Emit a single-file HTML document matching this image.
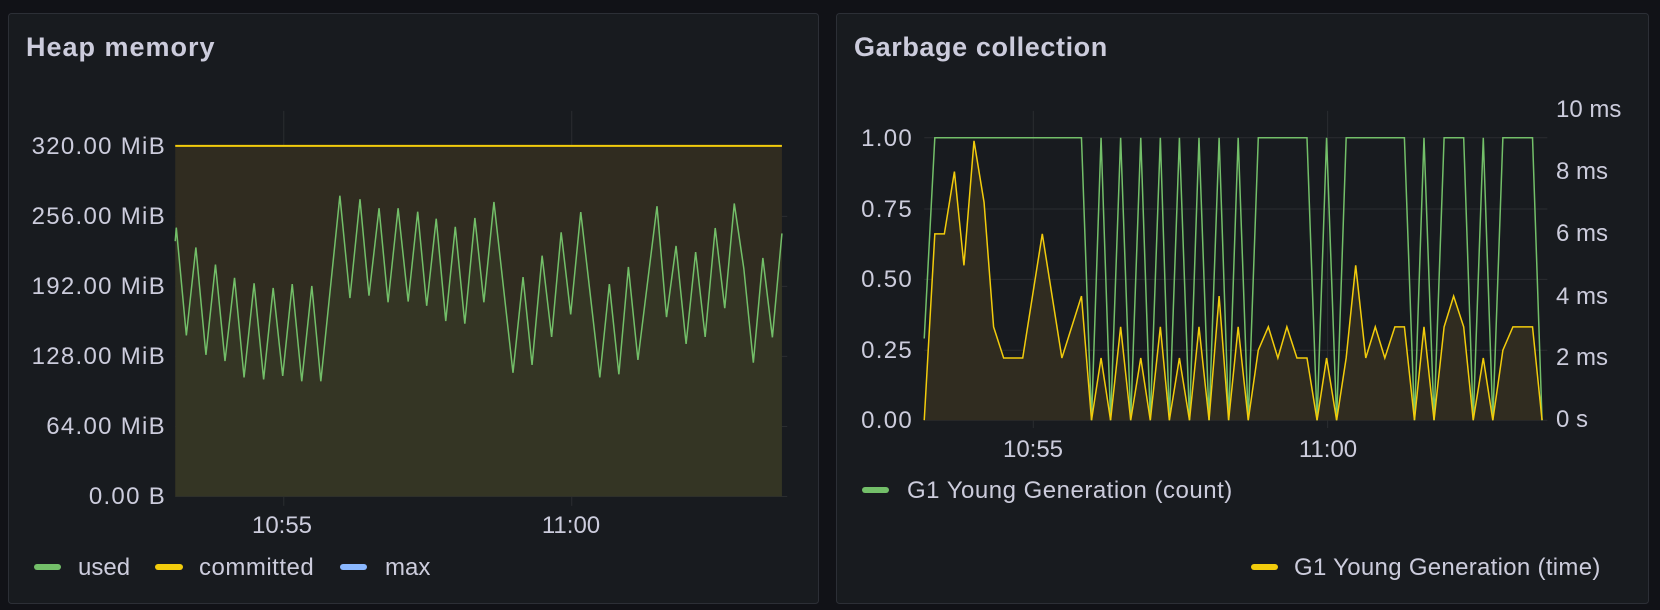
<!DOCTYPE html>
<html><head><meta charset="utf-8"><style>
html,body{margin:0;padding:0;background:#111217;width:1660px;height:610px;overflow:hidden;font-family:"Liberation Sans",sans-serif;}
svg{position:absolute;left:0;top:0}
text{font-family:"Liberation Sans",sans-serif;fill:#ccccdc}
</style></head><body>
<svg width="1660" height="610" viewBox="0 0 1660 610">
<rect x="8.5" y="13.5" width="810" height="590" rx="3" fill="#181b1f" stroke="#2c2f36"/>
<rect x="836.5" y="13.5" width="812" height="590" rx="3" fill="#181b1f" stroke="#2c2f36"/>
<text x="26" y="56" font-size="27" font-weight="bold" letter-spacing="1" fill="#d8d9e2">Heap memory</text>
<text x="854" y="56" font-size="27" font-weight="bold" letter-spacing="0.6" fill="#d8d9e2">Garbage collection</text>

<g transform="scale(0.5294,0.3891)">
<g stroke="#2a2d30" stroke-width="1">
<line x1="331" x2="1487" y1="556" y2="556" vector-effect="non-scaling-stroke"/>
<line x1="331" x2="1487" y1="736" y2="736" vector-effect="non-scaling-stroke"/>
<line x1="331" x2="1487" y1="916" y2="916" vector-effect="non-scaling-stroke"/>
<line x1="331" x2="1487" y1="1096" y2="1096" vector-effect="non-scaling-stroke"/>
<line x1="331" x2="1487" y1="1276" y2="1276" vector-effect="non-scaling-stroke"/>
<line x1="536" x2="536" y1="285" y2="1300" vector-effect="non-scaling-stroke"/>
<line x1="1080" x2="1080" y1="285" y2="1300" vector-effect="non-scaling-stroke"/>
</g>
<rect x="331" y="375" width="1146" height="901" fill="#302c20"/>
<polygon fill="rgba(115,191,105,0.07)" points="331,1276 331,620 333,585 352,862 370,636 389,912 407,680 425,928 443,714 461,970 480,728 498,975 516,740 534,966 552,730 570,980 589,735 606,980 642,503 661,766 680,512 697,760 716,535 733,777 752,535 771,775 789,544 806,786 824,562 842,825 860,583 878,832 897,560 914,777 933,519 969,958 988,712 1005,938 1024,657 1042,866 1060,597 1078,808 1097,545 1133,970 1151,730 1169,962 1187,686 1205,925 1241,530 1259,815 1277,632 1296,884 1314,648 1332,866 1351,586 1369,792 1387,523 1405,690 1423,932 1441,663 1459,867 1477,600 1477,1276"/>
<line x1="331" x2="1477" y1="375" y2="375" stroke="#f2cc0c" stroke-width="2" vector-effect="non-scaling-stroke"/>
<polyline fill="none" stroke="#73bf69" stroke-width="1.5" vector-effect="non-scaling-stroke" points="331,620 333,585 352,862 370,636 389,912 407,680 425,928 443,714 461,970 480,728 498,975 516,740 534,966 552,730 570,980 589,735 606,980 642,503 661,766 680,512 697,760 716,535 733,777 752,535 771,775 789,544 806,786 824,562 842,825 860,583 878,832 897,560 914,777 933,519 969,958 988,712 1005,938 1024,657 1042,866 1060,597 1078,808 1097,545 1133,970 1151,730 1169,962 1187,686 1205,925 1241,530 1259,815 1277,632 1296,884 1314,648 1332,866 1351,586 1369,792 1387,523 1405,690 1423,932 1441,663 1459,867 1477,600"/>
</g>

<g transform="translate(830,0) scale(0.5294,0.3891)">
<g stroke="#2a2d30">
<line x1="178" x2="1355" y1="354" y2="354" vector-effect="non-scaling-stroke"/>
<line x1="178" x2="1355" y1="537" y2="537" vector-effect="non-scaling-stroke"/>
<line x1="178" x2="1355" y1="718" y2="718" vector-effect="non-scaling-stroke"/>
<line x1="178" x2="1355" y1="900" y2="900" vector-effect="non-scaling-stroke"/>
<line x1="178" x2="1355" y1="1080" y2="1080" vector-effect="non-scaling-stroke"/>
<line x1="384" x2="384" y1="285" y2="1100" vector-effect="non-scaling-stroke"/>
<line x1="940" x2="940" y1="285" y2="1100" vector-effect="non-scaling-stroke"/>
</g>
<polygon fill="#302c20" points="178,1080 198,601 216,601 235,441 253,682 272,362 291,520 309,840 328,920 364,920 401,601 438,920 475,761 494,1080 512,920 530,1080 549,840 568,1080 587,920 605,1080 624,840 641,1080 660,920 679,1080 697,840 716,1080 735,761 753,1080 771,840 790,1080 809,900 828,840 846,920 863,840 882,920 901,920 920,1080 938,920 957,1080 975,920 993,682 1012,920 1030,840 1048,920 1067,840 1085,840 1104,1080 1122,840 1141,1080 1160,840 1178,761 1197,840 1215,1080 1234,920 1252,1080 1271,900 1290,840 1327,840 1345,1080"/>
<polyline fill="none" stroke="#73bf69" stroke-width="1.5" vector-effect="non-scaling-stroke" points="178,870 198,354 475,354 494,1080 512,354 530,1080 549,354 568,1080 587,354 605,1080 624,354 641,1080 660,354 679,1080 697,354 716,1080 735,354 753,1080 771,354 790,1080 809,354 901,354 920,1080 938,354 957,1080 975,354 1085,354 1104,1080 1122,354 1141,1080 1160,354 1197,354 1215,1080 1234,354 1252,1080 1271,354 1327,354 1345,1080"/>
<polyline fill="none" stroke="#f2cc0c" stroke-width="1.5" vector-effect="non-scaling-stroke" points="178,1080 198,601 216,601 235,441 253,682 272,362 291,520 309,840 328,920 364,920 401,601 438,920 475,761 494,1080 512,920 530,1080 549,840 568,1080 587,920 605,1080 624,840 641,1080 660,920 679,1080 697,840 716,1080 735,761 753,1080 771,840 790,1080 809,900 828,840 846,920 863,840 882,920 901,920 920,1080 938,920 957,1080 975,920 993,682 1012,920 1030,840 1048,920 1067,840 1085,840 1104,1080 1122,840 1141,1080 1160,840 1178,761 1197,840 1215,1080 1234,920 1252,1080 1271,900 1290,840 1327,840 1345,1080"/>
</g>

<g font-size="24" text-anchor="end" letter-spacing="1.3">
<text x="166" y="154">320.00 MiB</text>
<text x="166" y="224">256.00 MiB</text>
<text x="166" y="294">192.00 MiB</text>
<text x="166" y="364">128.00 MiB</text>
<text x="166" y="434">64.00 MiB</text>
<text x="166" y="504">0.00 B</text>
<text x="913" y="146">1.00</text>
<text x="913" y="217">0.75</text>
<text x="913" y="287">0.50</text>
<text x="913" y="358">0.25</text>
<text x="913" y="428">0.00</text>
</g>
<g font-size="24" text-anchor="start">
<text x="1556" y="117">10 ms</text>
<text x="1556" y="179">8 ms</text>
<text x="1556" y="241">6 ms</text>
<text x="1556" y="304">4 ms</text>
<text x="1556" y="365">2 ms</text>
<text x="1556" y="427">0 s</text>
</g>
<g font-size="24" text-anchor="middle">
<text x="282" y="533">10:55</text>
<text x="571" y="533">11:00</text>
<text x="1033" y="457">10:55</text>
<text x="1328" y="457">11:00</text>
</g>
<g font-size="24">
<rect x="34" y="564" width="27" height="6" rx="3" fill="#73bf69"/>
<text x="78" y="575">used</text>
<rect x="155" y="564" width="28" height="6" rx="3" fill="#f2cc0c"/>
<text x="199" y="575" letter-spacing="0.5">committed</text>
<rect x="340" y="564" width="27" height="6" rx="3" fill="#8ab8ff"/>
<text x="385" y="575" fill="#8e8e96">max</text>
<rect x="862" y="487" width="27" height="6" rx="3" fill="#73bf69"/>
<text x="907" y="498" letter-spacing="0.5">G1 Young Generation (count)</text>
<rect x="1251" y="564" width="27" height="6" rx="3" fill="#f2cc0c"/>
<text x="1294" y="575" letter-spacing="0.3">G1 Young Generation (time)</text>
</g>
</svg>
</body></html>
